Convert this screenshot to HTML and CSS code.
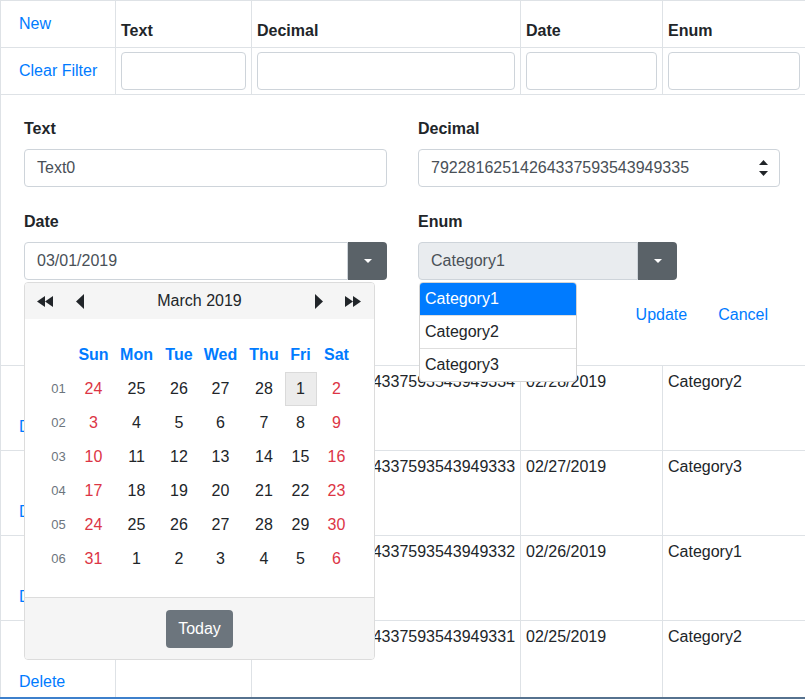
FILE: index.html
```html
<!DOCTYPE html>
<html>
<head>
<meta charset="utf-8">
<title>Grid</title>
<link rel="stylesheet" href="styles.css">
</head>
<body>
<table class="grid">
  <colgroup>
    <col class="c-act"><col class="c-text"><col class="c-dec"><col class="c-date"><col class="c-enum">
  </colgroup>
  <thead>
    <tr class="head-row">
      <th class="act"><a class="btn-link">New</a></th>
      <th>Text</th>
      <th>Decimal</th>
      <th>Date</th>
      <th>Enum</th>
    </tr>
    <tr class="filter-row">
      <td class="act"><a class="btn-link">Clear Filter</a></td>
      <td><div class="input"></div></td>
      <td><div class="input"></div></td>
      <td><div class="input"></div></td>
      <td><div class="input"></div></td>
    </tr>
  </thead>
  <tbody>
    <tr class="edit-row">
      <td colspan="5">
        <div class="edit-form">
          <div class="form-grid">
            <div class="field">
              <label>Text</label>
              <div class="input">Text0</div>
            </div>
            <div class="field">
              <label>Decimal</label>
              <div class="input spin">
                <span>79228162514264337593543949335</span>
                <svg class="spinner" width="9" height="17" viewBox="0 0 9 17"><polygon points="0,5 9,5 4.5,0" fill="#212529"/><polygon points="0,11 9,11 4.5,16" fill="#212529"/></svg>
              </div>
            </div>
            <div class="field">
              <label>Date</label>
              <div class="combo">
                <div class="input">03/01/2019</div>
                <span class="caret-btn"><span class="caret"></span></span>
                <div class="calendar">
                  <div class="cal-head">
                    <svg class="nav-dbl" width="16" height="11" viewBox="0 0 16 11"><polygon points="8,0 8,11 0,5.5"/><polygon points="16,0 16,11 8,5.5"/></svg>
                    <svg class="nav-one" width="8" height="15" viewBox="0 0 8 15"><polygon points="8,0 8,15 0,7.5"/></svg>
                    <span class="cal-title">March 2019</span>
                    <svg class="nav-one right" width="8" height="15" viewBox="0 0 8 15"><polygon points="0,0 0,15 8,7.5"/></svg>
                    <svg class="nav-dbl" width="16" height="11" viewBox="0 0 16 11"><polygon points="0,0 0,11 8,5.5"/><polygon points="8,0 8,11 16,5.5"/></svg>
                  </div>
                  <div class="cal-body">
                    <div class="cal-grid">
                      <span></span><span class="wd">Sun</span><span class="wd">Mon</span><span class="wd">Tue</span><span class="wd">Wed</span><span class="wd">Thu</span><span class="wd">Fri</span><span class="wd">Sat</span>
                      <span class="wk">01</span><span class="we">24</span><span>25</span><span>26</span><span>27</span><span>28</span><span class="today">1</span><span class="we">2</span>
                      <span class="wk">02</span><span class="we">3</span><span>4</span><span>5</span><span>6</span><span>7</span><span>8</span><span class="we">9</span>
                      <span class="wk">03</span><span class="we">10</span><span>11</span><span>12</span><span>13</span><span>14</span><span>15</span><span class="we">16</span>
                      <span class="wk">04</span><span class="we">17</span><span>18</span><span>19</span><span>20</span><span>21</span><span>22</span><span class="we">23</span>
                      <span class="wk">05</span><span class="we">24</span><span>25</span><span>26</span><span>27</span><span>28</span><span>29</span><span class="we">30</span>
                      <span class="wk">06</span><span class="we">31</span><span>1</span><span>2</span><span>3</span><span>4</span><span>5</span><span class="we">6</span>
                    </div>
                  </div>
                  <div class="cal-foot"><span class="btn-today">Today</span></div>
                </div>
              </div>
            </div>
            <div class="field">
              <label>Enum</label>
              <div class="combo enum">
                <div class="input readonly">Category1</div>
                <span class="caret-btn"><span class="caret"></span></span>
                <ul class="listbox">
                  <li class="selected">Category1</li>
                  <li>Category2</li>
                  <li>Category3</li>
                </ul>
              </div>
            </div>
          </div>
          <div class="actions">
            <a class="btn-link">Update</a>
            <a class="btn-link">Cancel</a>
          </div>
        </div>
      </td>
    </tr>
    <tr class="data-row">
      <td class="act"><a class="btn-link edit">Edit</a><a class="btn-link">Delete</a></td>
      <td>Text1</td><td>79228162514264337593543949334</td><td>02/28/2019</td><td>Category2</td>
    </tr>
    <tr class="data-row">
      <td class="act"><a class="btn-link edit">Edit</a><a class="btn-link">Delete</a></td>
      <td>Text2</td><td>79228162514264337593543949333</td><td>02/27/2019</td><td>Category3</td>
    </tr>
    <tr class="data-row">
      <td class="act"><a class="btn-link edit">Edit</a><a class="btn-link">Delete</a></td>
      <td>Text3</td><td>79228162514264337593543949332</td><td>02/26/2019</td><td>Category1</td>
    </tr>
    <tr class="data-row">
      <td class="act"><a class="btn-link edit">Edit</a><a class="btn-link">Delete</a></td>
      <td>Text4</td><td>79228162514264337593543949331</td><td>02/25/2019</td><td>Category2</td>
    </tr>
  </tbody>
</table>
<div class="page-edge"></div>
</body>
</html>
```
FILE: styles.css
```css
* { box-sizing: border-box; }
html, body { margin: 0; padding: 0; }
body {
  font-family: "Liberation Sans", Arial, sans-serif;
  font-size: 16px;
  line-height: 1.5;
  color: #212529;
  background: #fff;
  overflow: hidden;
}
.grid {
  width: 805px;
  border-collapse: collapse;
  table-layout: fixed;
}
.c-act { width: 115px; }
.c-text { width: 136px; }
.c-dec { width: 269px; }
.c-date { width: 142px; }
.c-enum { width: 143px; }
.grid th, .grid td {
  border: 1px solid #dee2e6;
  padding: 4px 5px;
  text-align: left;
  white-space: nowrap;
}
.grid th {
  vertical-align: bottom;
  font-weight: bold;
}
.grid th.act { font-weight: normal; }
.grid td { vertical-align: top; }
.btn-link {
  display: inline-block;
  color: #007bff;
  padding: 6px 12px;
  border: 1px solid transparent;
  line-height: 24px;
  text-decoration: none;
  cursor: pointer;
}
.filter-row td { vertical-align: middle; }
.input {
  height: 38px;
  border: 1px solid #ced4da;
  border-radius: 4px;
  padding: 0 12px;
  color: #495057;
  display: flex;
  align-items: center;
  background: #fff;
}
.edit-row > td { padding: 4px 5px; }
.edit-form { padding: 18px 19px 27px 18px; }
.form-grid {
  display: grid;
  grid-template-columns: 363px 362px;
  column-gap: 31px;
  row-gap: 23px;
}
.field label {
  display: block;
  font-weight: bold;
  margin-bottom: 8px;
  line-height: 24px;
}
.spin { justify-content: space-between; padding-right: 11px; }
.spinner { display: block; }
.combo { position: relative; display: flex; }
.combo .input { flex: 1; border-top-right-radius: 0; border-bottom-right-radius: 0; }
.combo.enum { width: 259px; }
.input.readonly { background: #e9ecef; }
.caret-btn {
  width: 39px;
  height: 38px;
  background: #5a6268;
  border-radius: 0 4px 4px 0;
  display: flex;
  align-items: center;
  justify-content: center;
}
.caret {
  width: 0; height: 0;
  border-left: 4px solid transparent;
  border-right: 4px solid transparent;
  border-top: 4px solid #fff;
}
.actions {
  display: flex;
  justify-content: flex-end;
  gap: 5px;
  margin-top: 16px;
}
.calendar {
  position: absolute;
  top: calc(100% + 2px);
  left: 0;
  width: 351px;
  border: 1px solid #dcdcdc;
  border-radius: 4px;
  background: #fff;
  overflow: hidden;
  z-index: 5;
}
.cal-head {
  height: 36px;
  background: #f5f5f5;
  display: flex;
  align-items: center;
  padding: 0 13px 0 12px;
}
.cal-head svg { fill: #212529; display: block; }
.nav-dbl + .nav-one { margin-left: 23px; }
.nav-one.right { margin-right: 22px; }
.cal-title { flex: 1; text-align: center; }
.cal-body { padding: 19px 0 21px; }
.cal-grid {
  display: grid;
  grid-template-columns: 32px 38px 48px 37px 46px 41px 32px 40px;
  grid-auto-rows: 34px;
  justify-content: center;
}
.cal-grid span {
  display: flex;
  align-items: center;
  justify-content: center;
}
.cal-grid .wd { color: #007bff; font-weight: bold; }
.cal-grid .wk { color: #6c757d; font-size: 13px; }
.cal-grid .we { color: #dc3545; }
.cal-grid .today {
  background: #ececec;
  border: 1px solid #dadada;
}
.cal-foot {
  border-top: 1px solid #dcdcdc;
  background: #f5f5f5;
  padding: 12px 0 11px;
  display: flex;
  justify-content: center;
}
.btn-today {
  display: inline-block;
  background: #6c757d;
  color: #fff;
  padding: 7px 12px;
  line-height: 24px;
  border-radius: 4px;
}
.listbox {
  position: absolute;
  top: calc(100% + 2px);
  left: 1px;
  width: 158px;
  margin: 0;
  padding: 0;
  list-style: none;
  background: #fff;
  border: 1px solid #d4d4d4;
  border-radius: 4px;
  overflow: hidden;
  z-index: 5;
}
.listbox li {
  padding: 4px 5px;
  line-height: 24px;
  border-bottom: 1px solid #dedede;
}
.listbox li:last-child { border-bottom: 0; }
.listbox li.selected { background: #007bff; color: #fff; }
.data-row td { height: 85px; }
.data-row .act { padding-top: 4px; }
.data-row .act .btn-link { display: block; width: max-content; }
.data-row .act .edit { color: #e9a6cc; margin-left: 5px; }
.page-edge {
  position: fixed;
  left: 0;
  right: 0;
  bottom: 0;
  height: 2px;
  background: linear-gradient(to right, #3d80cc 0, #3d80cc 160px, #56728f 160px);
}
```
